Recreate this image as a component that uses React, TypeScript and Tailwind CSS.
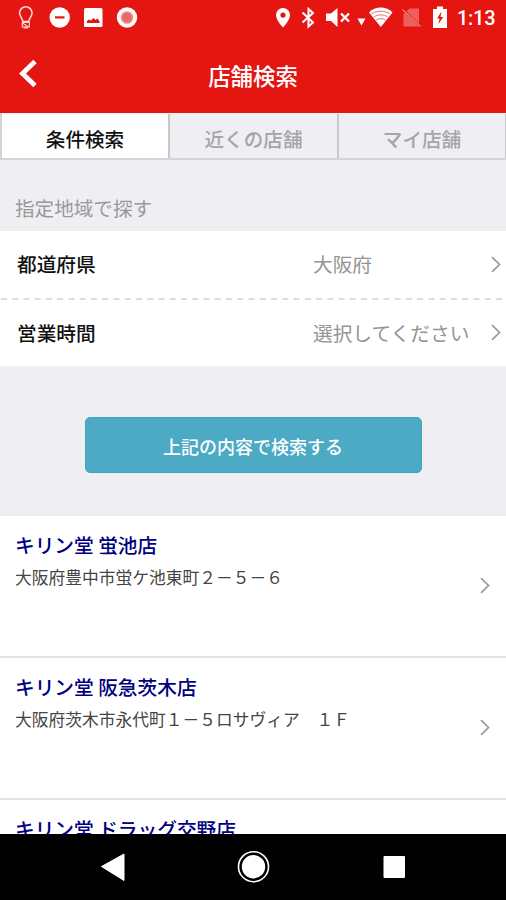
import type { ReactNode } from "react";

interface Store {
  name: string;
  address: string;
}

const tabs = ["条件検索", "近くの店舗", "マイ店舗"];

const stores: Store[] = [
  { name: "キリン堂 蛍池店", address: "大阪府豊中市蛍ケ池東町２－５－６" },
  { name: "キリン堂 阪急茨木店", address: "大阪府茨木市永代町１－５ロサヴィア　１Ｆ" },
  { name: "キリン堂 ドラッグ交野店", address: "" },
];

function Chevron() {
  return (
    <svg width="10" height="17" viewBox="0 0 10 17" fill="none" stroke="#999" strokeWidth="1.7">
      <path d="M1 1.2 8.5 8.5 1 15.8" />
    </svg>
  );
}

function StatusBar() {
  return (
    <svg className="block" width="506" height="36" viewBox="0 0 506 36" fill="#fff">
      <g fill="none" stroke="#fff">
        <path d="M22.800 21.500c0-3-3.300-5-3.300-8.500a6.300 6.200 0 0 1 12.600 0c0 3.500-3.300 5.500-3.300 8.500z" strokeWidth="1.500" opacity=".85" />
        <path d="M22.300 22.500h7v4.500h-7zM22.500 23l6 4M23.500 28h4.500" strokeWidth="1.200" opacity=".8" />
      </g>
      <circle cx="59.700" cy="17.500" r="10.200" />
      <path d="M55 16.300h9.500v2.200H55z" fill="#e51512" />
      <rect x="84" y="8" width="18.500" height="19" rx="1.500" />
      <path d="M87 23v-2l2-1.500 2 1 2.500-2.500 2 2 2-1.500 2 2.500v2z" fill="#e51512" />
      <circle cx="127" cy="17.500" r="10.200" />
      <circle cx="127" cy="17.500" r="6.300" fill="#f08782" />
      <circle cx="127" cy="17.500" r="4.500" fill="#e96a65" />

      <path
        fillRule="evenodd"
        d="M283 8a7 7 0 0 0-7 7c0 5.500 7 12.500 7 12.500s7-7 7-12.500a7 7 0 0 0-7-7zm0 4.500a2.600 2.600 0 1 1 0 5.200 2.600 2.600 0 0 1 0-5.200z"
      />
      <path d="M302.500 12.500 313 22.500 308.500 26.500V9L313 13 302.500 22.500" fill="none" stroke="#fff" strokeWidth="2" />
      <path d="M326 13.500h5l6.500-5.500v19l-6.500-6h-5z" />
      <path d="m341 13.500 8 8m0-8-8 8" stroke="#fff" strokeWidth="2.400" />
      <path d="M357.500 18.500h8l-4 7z" />
      <path d="M369 12.500C375 5.800 386.500 5.800 392.500 12.500L380.800 27z" />
      <path
        d="M371.500 14c5-3.700 13.500-3.700 18.500 0M373.800 17c4-2.800 10-2.800 14 0M376.200 20c2.700-1.800 6.500-1.800 9.200 0"
        fill="none"
        stroke="#ee6d68"
        strokeWidth="1"
      />
      <path d="M403.500 14 409.500 8.500H419V26.500H403.500z" opacity=".32" />
      <path d="m403 9.500 17.500 17" stroke="#e51512" strokeWidth="2.400" />
      <path d="m402.500 9.500 18 17" stroke="#fff" strokeWidth="1.200" opacity=".45" />
      <path d="M433 9h4V6.500h6V9h4v19h-14z" />
      <path d="m441.500 11.500-4.500 7h2.500l-1 5.500 4.700-7h-2.700z" fill="#e51512" />
      <text x="457" y="25.300" fontSize="20" fontWeight="500" fontFamily="Roboto, sans-serif" textLength="38.500">
        1:13
      </text>
    </svg>
  );
}

function FieldRow({ label, children }: { label: string; children: ReactNode }) {
  return (
    <div className="flex h-[66.5px] items-center pr-[5px] pl-[17px] text-[19.7px]">
      <span className="w-[296px] font-medium text-[#111]">{label}</span>
      <span className="grow text-[#949494]">{children}</span>
      <Chevron />
    </div>
  );
}

function StoreRow({ store }: { store: Store }) {
  return (
    <li className="flex h-[142px] shrink-0 justify-between border-b-2 border-[#e2e2e2] pr-4 pl-[15px]">
      <div className="pt-[14px]">
        <h2 className="text-[19.7px] leading-[30px] font-medium text-[#000080]">{store.name}</h2>
        <p className="mt-1 text-[16.75px] leading-[27px] whitespace-pre text-[#444]">{store.address}</p>
      </div>
      <div className="pt-[61px]">
        <Chevron />
      </div>
    </li>
  );
}

export default function App() {
  return (
    <div className="flex h-[900px] w-[506px] flex-col overflow-hidden bg-[#eeeef3] font-['Noto_Sans_CJK_JP',sans-serif]">
      <header className="h-[113px] shrink-0 bg-[#e51512] text-white">
        <StatusBar />
        <div className="grid h-[75px] grid-cols-[60px_1fr_60px] items-center">
          <svg className="ml-[17px]" width="21" height="30" viewBox="0 0 21 30" fill="none" stroke="#fff" strokeWidth="4.800">
            <path d="M18 2.500 5.500 14.500 18 26.500" />
          </svg>
          <h1 className="pt-1 text-center text-[22.4px] font-medium">店舗検索</h1>
        </div>
      </header>

      <nav className="flex h-[47px] shrink-0 border-b-2 border-l-2 border-[#d4d4d8] pt-px">
        {tabs.map((tab, i) => (
          <button
            key={tab}
            className={`border-[#c8c8ca] pt-[5px] text-[19.6px] font-medium ${
              i === 0 ? "w-[168px] border-r-2 bg-white text-[#111]" : i === 1 ? "w-[169px] border-r-2 text-[#a5a5a7]" : "grow border-r text-[#a5a5a7]"
            }`}
          >
            {tab}
          </button>
        ))}
      </nav>

      <p className="h-[71px] shrink-0 pt-[33px] pl-[15px] text-[19.6px] leading-[29px] text-[#999]">指定地域で探す</p>

      <section className="h-[135px] shrink-0 bg-white">
        <FieldRow label="都道府県">大阪府</FieldRow>
        <svg className="block" width="506" height="2">
          <path d="M1 1H506" stroke="#d2d2d2" strokeWidth="1.600" strokeDasharray="6 5.250" />
        </svg>
        <FieldRow label="営業時間">選択してください</FieldRow>
      </section>

      <div className="flex h-[150px] shrink-0 justify-center pt-[51px]">
        <button className="h-14 w-[337px] rounded-[5px] border border-[#3fa6c0] bg-[#4daac5] pt-0.5 text-[18px] font-medium text-white">
          上記の内容で検索する
        </button>
      </div>

      <ul className="flex min-h-0 grow flex-col overflow-hidden bg-white">
        {stores.map((store) => (
          <StoreRow key={store.name} store={store} />
        ))}
      </ul>

      <footer className="h-[66px] shrink-0 bg-black">
        <svg className="block" width="506" height="66" fill="#fff">
          <path d="M101.500 32.500 124 20v26.500z" strokeLinejoin="round" stroke="#fff" />
          <circle cx="253.500" cy="32.700" r="11.700" />
          <circle cx="253.500" cy="32.700" r="15" fill="none" stroke="#fff" strokeWidth="1.600" />
          <rect x="383.500" y="22" width="21.500" height="22" rx="1" />
        </svg>
      </footer>
    </div>
  );
}
